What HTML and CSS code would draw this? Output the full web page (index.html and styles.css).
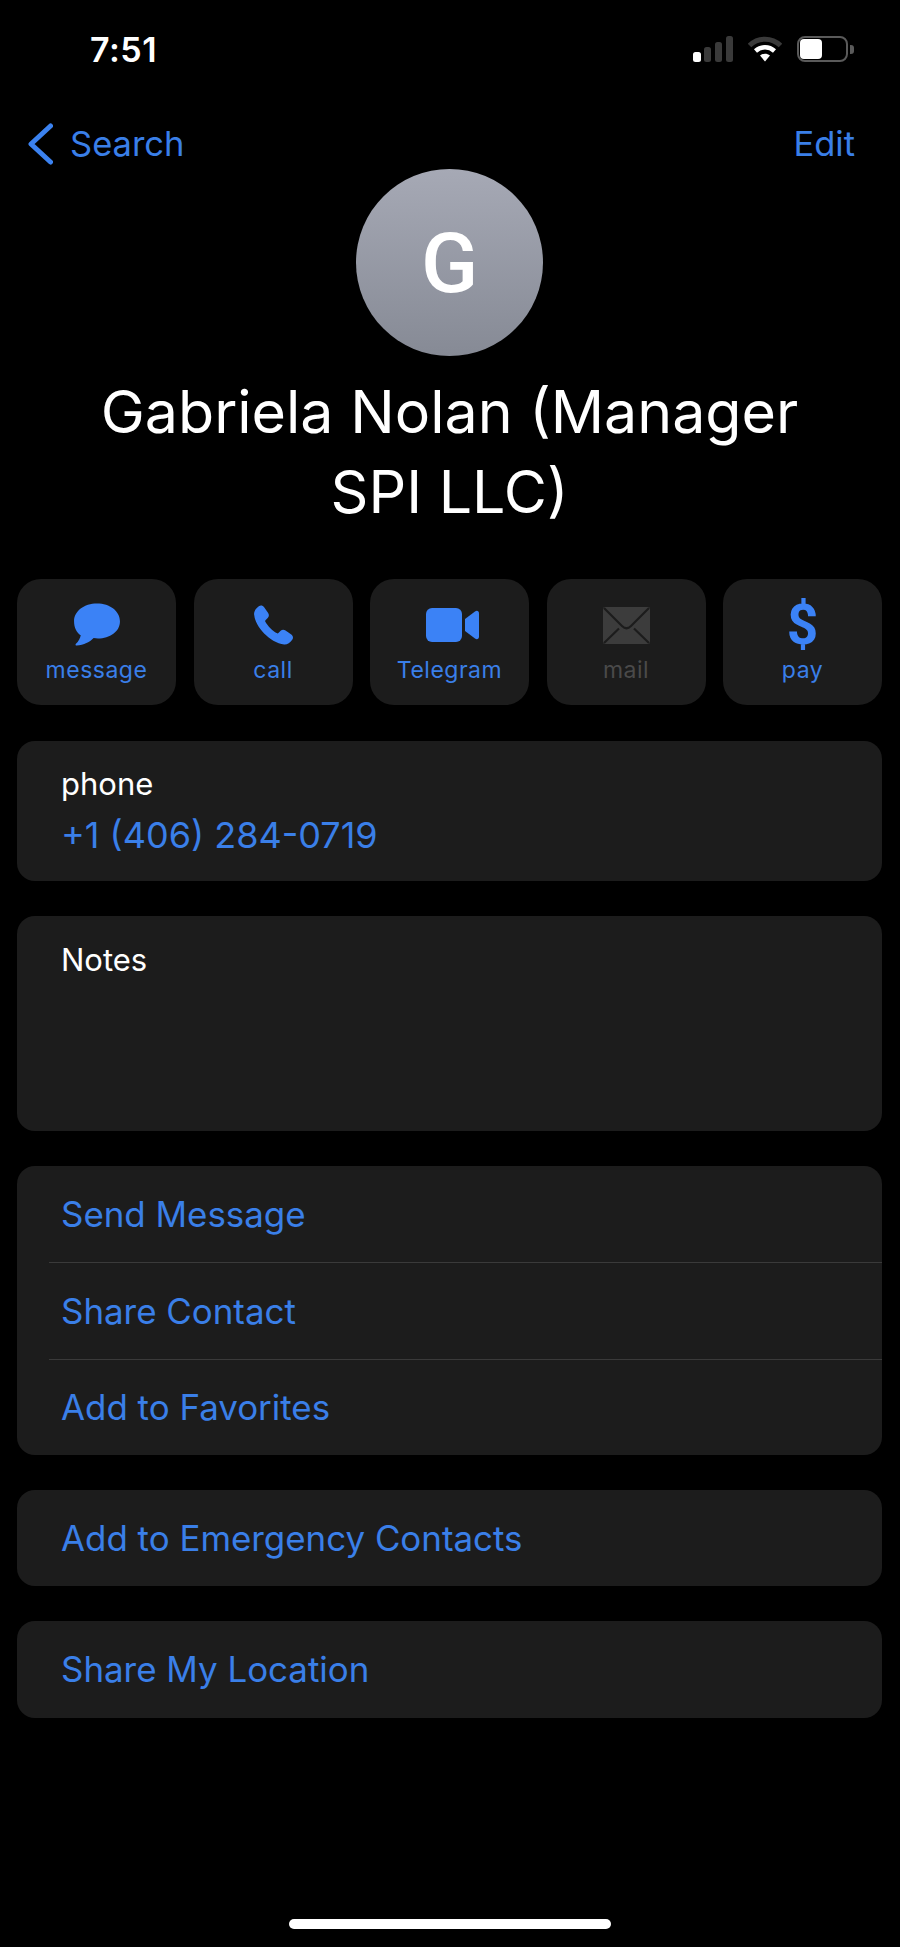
FILE: index.html
```html
<!DOCTYPE html>
<html lang="en">
<head>
<meta charset="utf-8">
<title>Gabriela Nolan</title>
<link rel="stylesheet" href="styles.css">
</head>
<body>
<div class="screen">
  <header class="status">
    <span class="time">7:51</span>
    <div class="status-icons">
      <svg class="signal" width="40" height="26" viewBox="0 0 40 26">
        <rect x="0" y="16" width="8" height="10" rx="2.5" fill="#fff"/>
        <rect x="11" y="11" width="7" height="15" rx="2.5" fill="#3a3a3a"/>
        <rect x="22" y="6" width="7" height="20" rx="2.5" fill="#3a3a3a"/>
        <rect x="33" y="0" width="7" height="26" rx="2.5" fill="#3a3a3a"/>
      </svg>
      <svg class="wifi" width="34" height="26" viewBox="0 0 34 26">
        <path d="M1.5 9.5 C10 1 24 1 32.5 9.5" fill="none" stroke="#3a3a3a" stroke-width="5"/>
        <path d="M7.5 15 C13 10 21 10 26.5 15" fill="none" stroke="#fff" stroke-width="4.5"/>
        <path d="M12 19.5 C15 17 19 17 22 19.5 L17 25.5 Z" fill="#fff"/>
      </svg>
      <div class="battery">
        <div class="battery-body"><div class="battery-fill"></div></div>
        <div class="battery-cap"></div>
      </div>
    </div>
  </header>

  <nav class="nav">
    <a class="back">
      <svg width="27" height="42" viewBox="0 0 27 42"><path d="M24.500 3 L5 21 L24.500 39" fill="none" stroke="#3b82f0" stroke-width="5" stroke-linecap="round" stroke-linejoin="round"/></svg>
      <span class="back-text">Search</span>
    </a>
    <a class="edit">Edit</a>
  </nav>

  <section class="profile">
    <div class="avatar">G</div>
    <h1 class="name">Gabriela Nolan (Manager<br>SPI LLC)</h1>
  </section>

  <section class="actions">
    <div class="action">
      <div class="icon-box"><svg width="48" height="44" viewBox="0 0 50 46"><path d="M25 0.5 C38.5 0.5 49 8.5 49 19 C49 30 38.500 37 26 37 C24.500 37 23 37 21.500 36.700 C18 40.500 11 44.200 3.800 44.500 C2.500 44.500 2.200 43.300 3 42.500 C5.500 40.500 7.500 37 8 33.800 C3.500 30.500 1 25.500 1 19 C1 8.500 11.500 0.500 25 0.500 Z" fill="#3b82f6"/></svg></div>
      <span class="action-label">message</span>
    </div>
    <div class="action">
      <div class="icon-box"><svg width="41" height="41" viewBox="0 0 46 46"><path d="M6.500 1.500 C8.500 0 11 0.500 12.500 2.500 L17 9 C18.300 11 18 13 16.500 14.500 L14 17 C13.500 17.600 13.500 18.300 14 19 C16.500 23.500 22 29 26.500 31.500 C27.300 32 28 32 28.500 31.500 L31 29 C32.500 27.500 34.500 27.300 36.500 28.500 L43 33 C45 34.500 45.500 37 44 39 C41.500 42.500 38.500 44.500 35 44.300 C27 43.800 18 37.500 12.500 32 C6.500 26 1.800 18 1.200 10.500 C1 7 3 4 6.500 1.500 Z" fill="#3b82f6"/></svg></div>
      <span class="action-label">call</span>
    </div>
    <div class="action">
      <div class="icon-box icon-video"><svg width="53" height="34" viewBox="0 0 53 34"><rect x="0" y="0" width="36" height="34" rx="6" fill="#3b82f6"/><path d="M39 11 L49 3.500 C51 2 53 3 53 5.500 L53 28.500 C53 31 51 32 49 30.500 L39 23 Z" fill="#3b82f6"/></svg></div>
      <span class="action-label">Telegram</span>
    </div>
    <div class="action disabled">
      <div class="icon-box"><svg width="47" height="37" viewBox="0 0 47 37"><rect x="0" y="0" width="47" height="37" rx="2" fill="#3c3c3c"/><path d="M1 1 L19 19 C22 22 25 22 28 19 L46 1 M1 36 L16 21.500 M46 36 L31 21.500" fill="none" stroke="#1c1c1c" stroke-width="2.200"/></svg></div>
      <span class="action-label">mail</span>
    </div>
    <div class="action">
      <div class="icon-box"><span class="dollar">$</span></div>
      <span class="action-label">pay</span>
    </div>
  </section>

  <section class="card phone">
    <div class="label">phone</div>
    <div class="value">+1 (406) 284-0719</div>
  </section>

  <section class="card notes">
    <div class="label">Notes</div>
  </section>

  <section class="card list">
    <div class="row">Send Message</div>
    <div class="row">Share Contact</div>
    <div class="row">Add to Favorites</div>
  </section>

  <section class="card list">
    <div class="row">Add to Emergency Contacts</div>
  </section>

  <section class="card list">
    <div class="row">Share My Location</div>
  </section>

  <div class="home-indicator"></div>
</div>
</body>
</html>
```
FILE: styles.css
```css
* { box-sizing: border-box; }
html, body { margin: 0; padding: 0; background: #000; }
body { font-family: Inter, "Liberation Sans", sans-serif; color: #fff; }
.screen { width: 900px; height: 1947px; background: #000; display: flex; flex-direction: column; padding: 0 18px 0 17px; position: relative; }

.status { height: 70px; display: flex; justify-content: space-between; align-items: flex-end; flex: none; }
.time { font-size: 34px; font-weight: 600; line-height: 40px; margin-left: 73px; letter-spacing: 0.5px; }
.status-icons { display: flex; align-items: center; gap: 15px; margin-right: 28px; margin-bottom: 8px; }
.battery { display: flex; align-items: center; gap: 2px; }
.battery-body { width: 51px; height: 26px; border: 2px solid #5a5a5a; border-radius: 8px; padding: 1px; }
.battery-fill { width: 22px; height: 100%; background: #fff; border-radius: 4px; }
.battery-cap { width: 4px; height: 9px; background: #5a5a5a; border-radius: 0 3px 3px 0; }

.nav { height: 42px; margin-top: 53px; display: flex; justify-content: space-between; align-items: center; flex: none; }
.back { display: flex; align-items: center; gap: 17px; margin-left: 9px; color: #3a7fe8; font-size: 34.5px; }
.back-text { padding-bottom: 2px; }
.edit { color: #3a7fe8; font-size: 34.5px; margin-right: 27px; padding-bottom: 2px; }

.profile { display: flex; flex-direction: column; align-items: center; flex: none; }
.avatar { width: 187px; height: 187px; margin-top: 4px; padding-top: 2px; border-radius: 50%; background: linear-gradient(#a6a9b5, #868a95); display: flex; align-items: center; justify-content: center; font-family: Roboto, Inter, sans-serif; font-size: 84px; font-weight: 500; color: #fff; }
.name { margin: 16px 0 0; font-size: 59.1px; font-weight: 400; line-height: 80px; text-align: center; white-space: nowrap; }

.actions { display: grid; grid-template-columns: repeat(5, 159px); justify-content: space-between; margin-top: 47px; flex: none; }
.action { height: 126px; background: #1c1c1c; border-radius: 24px; display: flex; flex-direction: column; align-items: center; padding-top: 20px; color: #3a7fe8; }
.icon-box { height: 52px; display: flex; align-items: center; justify-content: center; margin-bottom: 6px; }
.icon-video { padding-left: 5px; }
.action-label { font-size: 23px; line-height: 26px; letter-spacing: 0.5px; }
.action.disabled { color: #4a4a4a; }
.dollar { display: block; font-family: Roboto, Inter, sans-serif; font-size: 55px; font-weight: 700; line-height: 52px; height: 52px; color: #3b82f6; }

.card { background: #1c1c1c; border-radius: 18px; flex: none; }
.phone { margin-top: 36px; height: 140px; padding: 25px 44px 0; }
.notes { margin-top: 35px; height: 215px; padding: 26px 44px 0; }
.label { font-size: 31px; line-height: 36px; color: #fff; }
.value { font-size: 36px; line-height: 44px; color: #3a7fe8; margin-top: 11px; }
.list { margin-top: 35px; padding-left: 32px; }
.row { height: 96.33px; display: flex; align-items: center; padding-left: 12px; font-size: 34.9px; color: #3a7fe8; border-top: 1px solid #3a3a3a; }
.row:first-child { border-top: 0; }

.home-indicator { position: absolute; left: 289px; top: 1919px; width: 322px; height: 10px; border-radius: 5px; background: #fff; }
```
